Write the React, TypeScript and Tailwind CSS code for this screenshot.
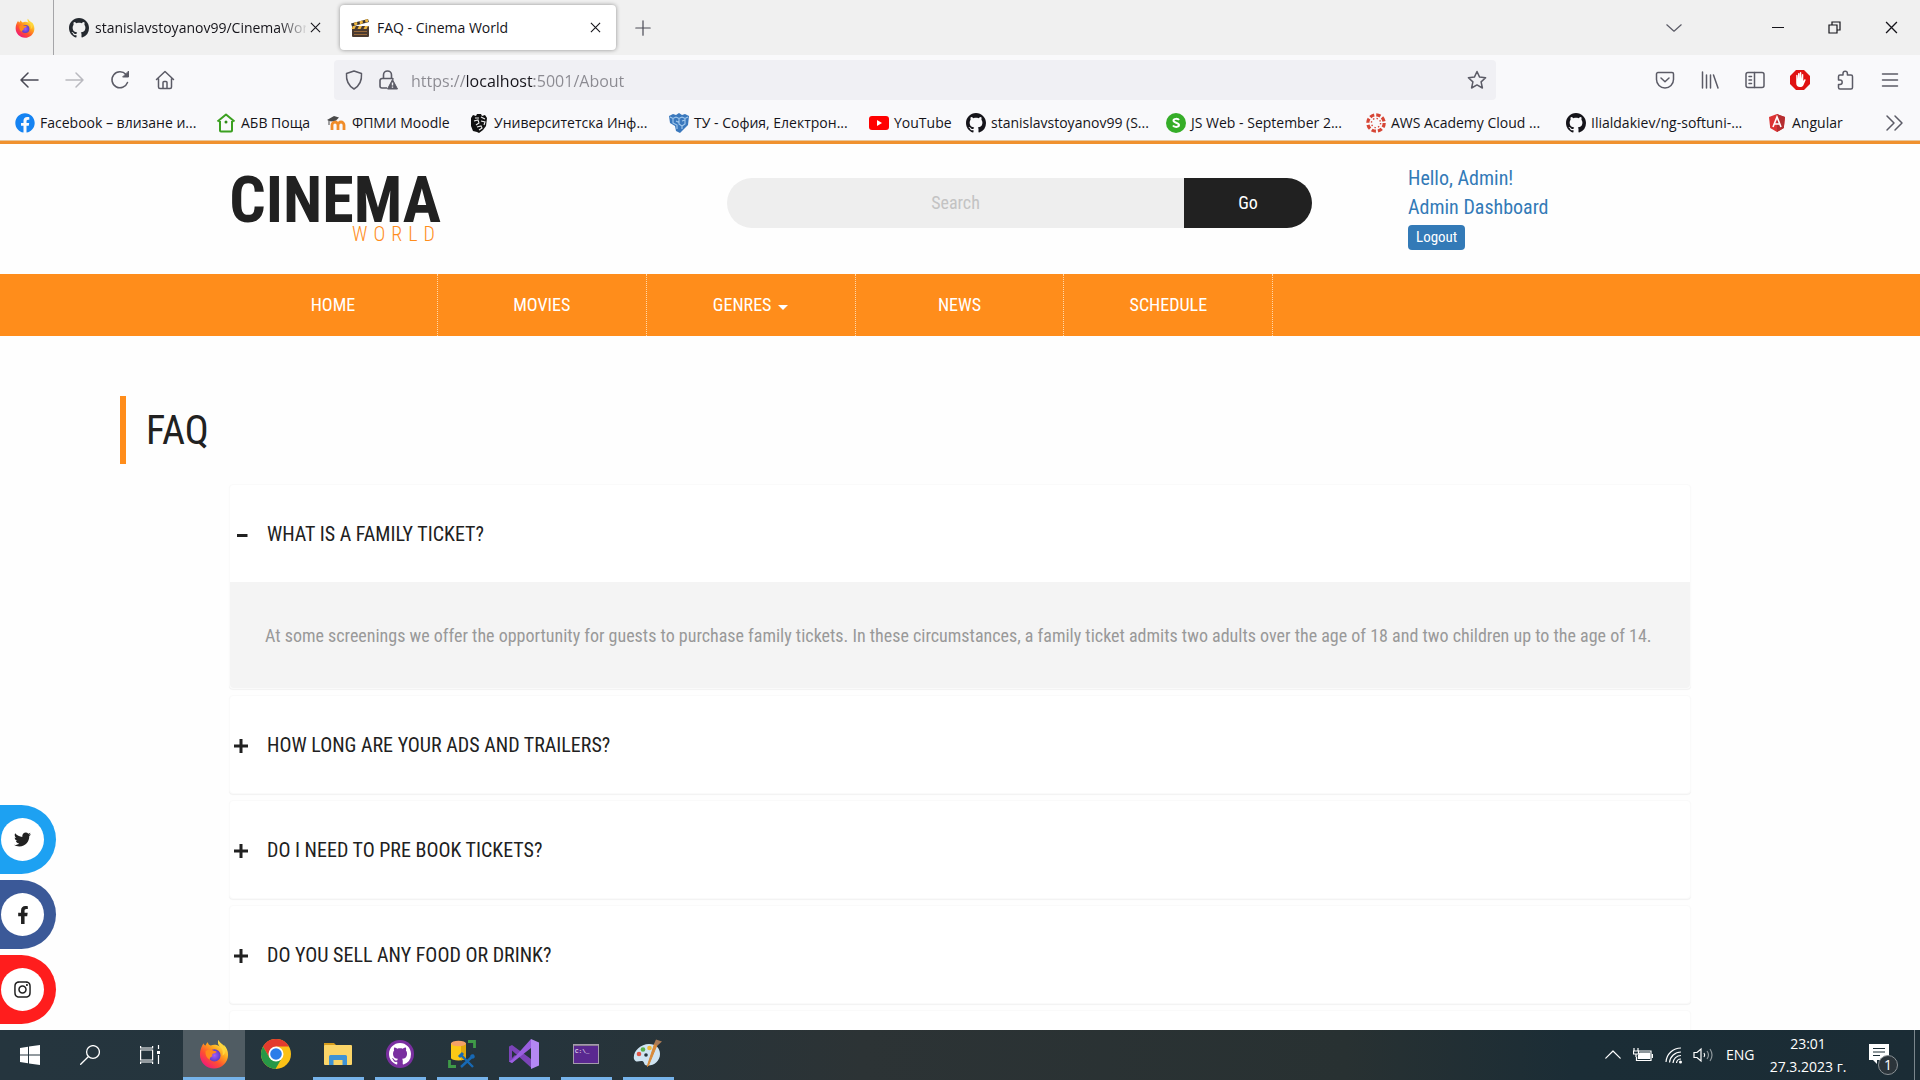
import { useState, type ReactNode } from "react";
import { FaFacebook, FaFacebookF, FaInstagram, FaTwitter } from "react-icons/fa";

const ui = "font-['Open_Sans','Noto_Sans',sans-serif]";
const site = "font-['Roboto_Condensed','Liberation_Sans_Narrow','Roboto',sans-serif]";

const GithubMark = ({ className = "size-5" }: { className?: string }) => (
  <svg viewBox="0 0 16 16" fill="currentColor" className={className} aria-hidden="true">
    <path d="M8 0C3.58 0 0 3.58 0 8c0 3.54 2.29 6.53 5.47 7.59.4.07.55-.17.55-.38 0-.19-.01-.82-.01-1.49-2.01.37-2.53-.49-2.69-.94-.09-.23-.48-.94-.82-1.13-.28-.15-.68-.52-.01-.53.63-.01 1.08.58 1.23.82.72 1.21 1.87.87 2.33.66.07-.52.28-.87.51-1.07-1.78-.2-3.64-.89-3.64-3.95 0-.87.31-1.59.82-2.15-.08-.2-.36-1.02.08-2.12 0 0 .67-.21 2.2.82.64-.18 1.32-.27 2-.27s1.36.09 2 .27c1.53-1.04 2.2-.82 2.2-.82.44 1.1.16 1.92.08 2.12.51.56.82 1.27.82 2.15 0 3.07-1.87 3.75-3.65 3.95.29.25.54.73.54 1.48 0 1.07-.01 1.93-.01 2.2 0 .21.15.46.55.38A8.01 8.01 0 0 0 16 8c0-4.42-3.58-8-8-8z" />
  </svg>
);

const Firefox = ({ className, id }: { className: string; id: string }) => (
  <svg viewBox="0 0 32 32" className={className} aria-hidden="true">
    <defs>
      <linearGradient id={`${id}-a`} x1="0.85" y1="0.1" x2="0.2" y2="0.95">
        <stop offset="0" stopColor="#fff44f" />
        <stop offset="0.35" stopColor="#ffa41c" />
        <stop offset="0.65" stopColor="#ff5130" />
        <stop offset="1" stopColor="#f0167c" />
      </linearGradient>
      <radialGradient id={`${id}-b`}>
        <stop offset="0" stopColor="#a35bff" />
        <stop offset="1" stopColor="#5b3ec4" />
      </radialGradient>
    </defs>
    <path fill={`url(#${id}-a)`} d="M20.5 1c-.6 3 .2 5 2 7-3-2-7-2.500-10-1C10.500 6.500 9.500 5 9.500 3.500 8.500 4.200 7.500 5.500 7 7c-1-.3-2-1.500-2-2.500C3 7 1 11.500 1 16.500 1 25 7.700 31.500 16 31.500S31 25 31 17c0-4-1.500-8-4.500-10.500.3 1.200.4 2 .2 3C25.500 5.500 22 4.500 20.500 1z" />
    <circle cx="16.500" cy="17.500" r="6.500" fill={`url(#${id}-b)`} />
    <path fill="#ff8a1c" d="M7 13c3-2.500 6-2 8.500-.5 2 .2 3 .5 3.200 1.300-1 1.500-3 1.500-4 2-.8.700-1 1.700-.2 2.700-2 .5-3.300 2-3 3.500C8 20.500 6.500 17 7 13z" />
    <path fill="#ffd53d" d="M20.500 1c-.6 3 .2 5 2 7 2.500 2.500 3.500 6 2.500 9.500 3-1 4-5 2-10C25.500 5.500 22 4.500 20.500 1z" />
  </svg>
);

const Stroke = ({ children, className = "size-5", width = 1.5 }: { children: ReactNode; className?: string; width?: number }) => (
  <svg viewBox="0 0 20 20" fill="none" stroke="currentColor" strokeWidth={width} strokeLinecap="round" strokeLinejoin="round" className={className} aria-hidden="true">
    {children}
  </svg>
);

const Cross = ({ className = "size-3" }: { className?: string }) => (
  <svg viewBox="0 0 12 12" stroke="currentColor" strokeWidth="1.200" className={className} aria-hidden="true">
    <path d="M1 1l10 10M11 1L1 11" />
  </svg>
);

const Clapper = () => (
  <svg viewBox="0 0 20 20" className="size-5" aria-hidden="true">
    <path d="M1 5.500L18 1l1 3L2 8.500z" fill="#3a3330" />
    <path d="M4 4.700l3-.8.500 2.700-3 1zM9.500 3.300l3-.8.500 2.700-3 1zM15 1.800l2.500-.7.800 2.700-2.800.800z" fill="#f0b840" />
    <rect x="2" y="8" width="17" height="11" rx="1" fill="#4a3a30" />
    <path d="M3 8h3l-1.500 3h-3zM9 8h3l-1.500 3h-3zM15 8h3l-1.500 3h-3z" fill="#f0b840" />
    <path d="M4 13.500h13M4 16.500h13" stroke="#9a6a3a" />
  </svg>
);

const Tabs = () => (
  <div className="flex h-[55px] items-center bg-[#f0f0f0] text-[#15141a]">
    <button aria-label="Firefox View" className="flex h-full w-[54px] items-center justify-center border-r border-[#a5a5a8] pr-2 pl-1">
      <Firefox className="size-5" id="ffs" />
    </button>
    <div className="flex w-[286px] items-center pl-[15px]">
      <GithubMark className="size-5 shrink-0 text-[#24292f]" />
      <span className="ml-[6px] w-[211px] text-sm whitespace-nowrap [mask-image:linear-gradient(to_right,black_184px,transparent_214px)]">
        stanislavstoyanov99/CinemaWor
      </span>
      <button aria-label="Close tab" className="ml-1"><Cross className="size-[11px]" /></button>
    </div>
    <div className="flex h-[45px] w-[276px] items-center rounded bg-white pr-[15px] pl-[10px] shadow-[0_0_4px_rgba(0,0,0,0.4)]">
      <Clapper />
      <span className="ml-[7px] flex-1 text-sm">FAQ - Cinema World</span>
      <button aria-label="Close tab"><Cross className="size-[11px]" /></button>
    </div>
    <button aria-label="New tab" className="ml-[19px] text-[#4a4a55]">
      <Stroke className="size-4" width={1.5}><path d="M10 1v18M1 10h18" /></Stroke>
    </button>
    <div className="ml-auto flex items-center">
      <button aria-label="List all tabs" className="mr-[47px] flex w-[57px] justify-center text-[#5b5b66]">
        <Stroke className="size-4"><path d="M1 6l9 8 9-8" /></Stroke>
      </button>
      <button aria-label="Minimize" className="flex w-[57px] justify-center">
        <svg viewBox="0 0 12 12" className="size-3" stroke="currentColor" aria-hidden="true"><path d="M0 5.500h12" /></svg>
      </button>
      <button aria-label="Restore" className="flex w-[57px] justify-center">
        <svg viewBox="0 0 13 13" className="size-[13px]" fill="none" stroke="currentColor" strokeWidth="1.200" aria-hidden="true">
          <path d="M1 4h8v8H1zM4 4V1h8v8H9" />
        </svg>
      </button>
      <button aria-label="Close window" className="flex w-[57px] justify-center"><Cross className="size-[13px]" /></button>
    </div>
  </div>
);

const Toolbar = () => (
  <div className="flex h-[50px] items-center bg-[#f9f9fb] text-[#5b5b66]">
    <div className="flex w-[334px] items-center gap-[25px] pl-5">
      <button aria-label="Back" className="text-[#4a4a55]"><Stroke><path d="M18 10H1M8 3l-7 7 7 7" /></Stroke></button>
      <button aria-label="Forward" className="text-[#b9b9bf]"><Stroke><path d="M1 10h17M11 3l7 7-7 7" /></Stroke></button>
      <button aria-label="Reload">
        <Stroke><path d="M17.500 12.500A8 8 0 1 1 16 4.500l1.500 1.500" /><path d="M18.500 1.500V7H13z" fill="currentColor" strokeWidth="1" /></Stroke>
      </button>
      <button aria-label="Home">
        <Stroke><path d="M1.500 9.500L10 1.500l8.500 8M3.500 8.500V17a1.500 1.500 0 0 0 1.500 1.500h10a1.500 1.500 0 0 0 1.500-1.500V8.500M8 18v-5.500a1 1 0 0 1 1-1h2a1 1 0 0 1 1 1V18" /></Stroke>
      </button>
    </div>
    <div className="flex h-10 w-[1162px] shrink items-center rounded bg-[#f0f0f4] px-[9px] pl-[10px]">
      <Stroke><path d="M10 1l7.500 2.500c.5 7-1.500 12-7.500 15.500C4 15.500 2 10.500 2.500 3.500z" /></Stroke>
      <svg viewBox="0 0 20 20" className="ml-[14px] size-5" fill="none" stroke="currentColor" strokeWidth="1.600" aria-hidden="true">
        <path d="M5.500 8.500V5a4 4 0 0 1 8 0v3.500M9 18H4a2 2 0 0 1-2-2v-5.500a2 2 0 0 1 2-2h10.500l1 1" />
        <path d="M14.500 9.500l5 9.500h-10z" fill="currentColor" strokeLinejoin="round" strokeWidth="1" />
        <path d="M14.500 12.500v3M14.500 16.500v1.300" stroke="#f0f0f4" strokeWidth="1.400" />
      </svg>
      <input
        aria-label="Address"
        defaultValue="https://localhost:5001/About"
        className="mt-[2px] ml-[13px] min-w-0 flex-1 bg-[linear-gradient(to_right,#8b8a91_56px,#15141a_56px,#15141a_123px,#8b8a91_123px)] bg-clip-text text-base text-transparent caret-black outline-none"
      />
      <button aria-label="Bookmark this page">
        <Stroke><path d="M10 1.500l2.600 5.600 6 .7-4.500 4.100 1.300 6.100-5.400-3.100L4.600 18l1.300-6.100L1.400 7.800l6-.7z" /></Stroke>
      </button>
    </div>
    <div className="ml-auto flex items-center gap-[25px] pr-5">
      <button aria-label="Save to Pocket">
        <Stroke><path d="M3 2.500h14a1.500 1.500 0 0 1 1.500 1.500v5.500a8.500 8.500 0 0 1-17 0V4A1.500 1.500 0 0 1 3 2.500zM6 8l4 3.800L14 8" /></Stroke>
      </button>
      <button aria-label="Library"><Stroke><path d="M2.500 2v16M6.500 5v13M10.500 5v13M13.500 5l4.500 13" /></Stroke></button>
      <button aria-label="Sidebars">
        <Stroke><rect x="1" y="2.500" width="18" height="15" rx="2" /><path d="M9.500 2.500v15M4 6.500h2.500M4 10h2.500M4 13.500h2.500" /></Stroke>
      </button>
      <button aria-label="AdBlock">
        <svg viewBox="0 0 20 20" className="size-5" aria-hidden="true">
          <path d="M6 0h8l6 6v8l-6 6H6l-6-6V6z" fill="#e01212" />
          <path d="M6.200 10V5.500c0-1 1.300-1 1.400 0L8 9V3.700c0-1 1.500-1 1.500 0V8.500l.3-5.700c.1-1 1.500-1 1.500 0V9l.6-4.500c.1-.9 1.400-.7 1.400.1V11l1-1.500c.7-.8 1.700 0 1.200.9l-2 4.600c-.6 1.400-1.600 2-3.500 2-2.500 0-3.800-1.600-3.800-4z" fill="#fff" />
        </svg>
      </button>
      <button aria-label="Extensions">
        <Stroke><path d="M8 5V3.500a2.200 2.200 0 0 1 4.400 0V5H16a1.500 1.500 0 0 1 1.500 1.500v11A1.500 1.500 0 0 1 16 19H5a1.500 1.500 0 0 1-1.500-1.500v-3H5a2.200 2.200 0 0 0 0-4.400H3.500V6.500A1.500 1.500 0 0 1 5 5z" /></Stroke>
      </button>
      <button aria-label="Application menu"><Stroke><path d="M2.500 4h15M2.500 10h15M2.500 16h15" /></Stroke></button>
    </div>
  </div>
);

const bookmarks: { label: string; width: string; icon: ReactNode }[] = [
  { label: "Facebook – влизане и...", width: "w-[201px]", icon: <FaFacebook className="size-5 text-[#1583f2]" /> },
  {
    label: "АБВ Поща", width: "w-[111px]",
    icon: <svg viewBox="0 0 20 20" className="size-5"><path d="M4 8v9.500a1 1 0 0 0 1 1h10a1 1 0 0 0 1-1V8M1.500 8.500L10 1.500l8.500 7" fill="none" stroke="#3ba020" strokeWidth="2" strokeLinejoin="round" /><circle cx="10" cy="9" r="1.500" fill="#2f8a18" /></svg>,
  },
  {
    label: "ФПМИ Moodle", width: "w-[142px]",
    icon: <svg viewBox="0 0 20 20" className="size-5"><path d="M5 17v-5a3 3 0 0 1 6 0v5M11 17v-5a3 3 0 0 1 6 0v5" fill="none" stroke="#f08c28" strokeWidth="2.800" /><path d="M0 7l7-4 5 1.500-3 3-5 1z" fill="#4a4a4a" /><path d="M2 7v5" stroke="#4a4a4a" /></svg>,
  },
  {
    label: "Университетска Инф...", width: "w-[200px]",
    icon: <svg viewBox="0 0 20 20" className="size-5"><path d="M2 5l2-3 3 1 1-2h4l1 2 3-1 2 3-1 8-3 4-4 3-2-1-4-1-2-5z" fill="#111" /><path d="M6 5h4M12 4l4 2M5 8l4-1 1 3-3 2M12 8l4 1-1 3M8 14l4-1 1 2-3 2" fill="none" stroke="#eee" strokeWidth="1.100" /></svg>,
  },
  {
    label: "ТУ - София, Електрон...", width: "w-[200px]",
    icon: <svg viewBox="0 0 20 20" className="size-5"><path d="M0 3l4-2 3 1 3-2 3 2 3-1 4 2-1 9-4 4-4 4-4-2-1-5-5-3z" fill="#3a78bd" /><path d="M1 4l3 1.500L7 4l3 1.500L13 4l3 1.500L19 4M4 6v4l4 2v4M10 6v5l3 2v3M16 6v5l-3 2M7 8l3 1.500M13 8l3-1" fill="none" stroke="#a5cbee" strokeWidth="1.100" /></svg>,
  },
  {
    label: "YouTube", width: "w-[97px]",
    icon: <svg viewBox="0 0 20 20" className="size-5"><rect y="3" width="20" height="14" rx="3" fill="#f00" /><path d="M8 7l5 3-5 3z" fill="#fff" /></svg>,
  },
  { label: "stanislavstoyanov99 (S...", width: "w-[200px]", icon: <GithubMark /> },
  {
    label: "JS Web - September 2...", width: "w-[200px]",
    icon: <svg viewBox="0 0 20 20" className="size-5"><circle cx="10" cy="10" r="10" fill="#35ad28" /><path d="M13 7c-.8-1.400-5.500-1.800-5.500.6 0 2.600 5.500 1.600 5.500 4.500 0 2.500-5 2.200-6 .5" fill="none" stroke="#fff" strokeWidth="2" /></svg>,
  },
  {
    label: "AWS Academy Cloud ...", width: "w-[200px]",
    icon: <svg viewBox="0 0 20 20" className="size-5" fill="none" stroke="#d64535"><circle cx="10" cy="10" r="8.200" strokeWidth="3.200" strokeDasharray="4.400 2.040" /><circle cx="10" cy="10" r="4.600" strokeWidth="1.400" strokeDasharray="1.400 2.210" /></svg>,
  },
  { label: "Ilialdakiev/ng-softuni-...", width: "w-[201px]", icon: <GithubMark /> },
  {
    label: "Angular", width: "w-[100px]",
    icon: <svg viewBox="0 0 20 20" className="size-5"><path d="M10 1l8 3-1.200 11L10 19l-6.800-4L2 4z" fill="#dd3333" /><path d="M10 1l8 3-1.200 11L10 19z" fill="#b52e31" /><path d="M6 14l4-10 4 10M7.500 11h5" fill="none" stroke="#fff" strokeWidth="1.600" /></svg>,
  },
];

const Bookmarks = () => (
  <nav aria-label="Bookmarks" className="flex h-[35px] items-center bg-[#f9f9fb] pt-px pl-[15px] text-[#15141a]">
    {bookmarks.map((b) => (
      <a key={b.label} href="#" className={`flex shrink items-center gap-[5px] text-sm whitespace-nowrap ${b.width}`}>
        <span className="shrink-0">{b.icon}</span>
        {b.label}
      </a>
    ))}
    <button aria-label="More bookmarks" className="mr-[15px] ml-auto text-[#5b5b66]">
      <Stroke><path d="M2 3l7 7-7 7M10 3l7 7-7 7" /></Stroke>
    </button>
  </nav>
);

const navItems = ["HOME", "MOVIES", "GENRES", "NEWS", "SCHEDULE"];

const SiteHeader = () => (
  <header>
    <div className="h-1 border-t border-[#e8c79c] bg-[#f0912f]" />
    <div className="mx-auto flex h-[130px] max-w-[1464px]">
      <a href="#" className="mt-8 ml-[2px] flex w-[211px] flex-col items-end">
        <span className="text-[64px] leading-[50px] font-bold text-[#212121]">CINEMA</span>
        <span className="text-xl leading-4 font-light tracking-[6px] text-[#ff8d1b]">WORLD</span>
      </a>
      <form role="search" onSubmit={(e) => e.preventDefault()} className="mt-[34px] ml-[286px] flex h-[50px] w-[585px]">
        <input aria-label="Search" placeholder="Search" className="min-w-0 flex-1 rounded-l-full bg-[#eee] text-center text-lg outline-none placeholder:text-[#c3c3c3]" />
        <button className="w-32 rounded-r-full bg-[#212121] text-lg text-white">Go</button>
      </form>
      <div className="mt-5 ml-24 flex flex-col items-start text-xl leading-[29px] text-[#337ab7]">
        <a href="#">Hello, Admin!</a>
        <a href="#">Admin Dashboard</a>
        <button className="mt-[3px] h-[25px] rounded bg-[#337ab7] px-2 text-[15px] leading-[25px] text-white">Logout</button>
      </div>
    </div>
    <nav aria-label="Main" className="bg-[#ff8d1b]">
      <ul className="mx-auto grid h-[62px] max-w-[1462px] grid-cols-7">
        {navItems.map((n) => (
          <li key={n} className="border-r border-dotted border-[#ffd7a8]">
            <a href="#" className="flex h-full items-center justify-center text-lg text-white">
              {n}
              {n === "GENRES" && <span className="mt-1 ml-[7px] border-x-[5px] border-t-[5px] border-x-transparent border-t-white" />}
            </a>
          </li>
        ))}
      </ul>
    </nav>
  </header>
);

const questions = [
  {
    q: "WHAT IS A FAMILY TICKET?",
    a: "At some screenings we offer the opportunity for guests to purchase family tickets. In these circumstances, a family ticket admits two adults over the age of 18 and two children up to the age of 14.",
  },
  { q: "HOW LONG ARE YOUR ADS AND TRAILERS?" },
  { q: "DO I NEED TO PRE BOOK TICKETS?" },
  { q: "DO YOU SELL ANY FOOD OR DRINK?" },
  { q: "" },
];

const Faq = () => {
  const [open, setOpen] = useState(0);
  return (
    <div>
      <div className="mx-auto mt-[60px] max-w-[1680px]">
        <h1 className="h-[68px] border-l-[6px] border-[#ff8d1b] pl-5 text-[40px] leading-[70px] text-[#212121]">FAQ</h1>
      </div>
      <div className="mx-auto mt-5 flex max-w-[1462px] flex-col gap-[6px]">
        {questions.map((item, i) => (
          <section key={i} className="rounded border border-[#fafafa] bg-white shadow-[0_1px_1px_rgba(0,0,0,0.05)]">
            <h2>
              <button
                aria-expanded={open === i}
                aria-label={item.q || "More questions"}
                onClick={() => setOpen(open === i ? -1 : i)}
                className="flex h-[97px] w-full items-center pl-1 text-left text-xl text-[#212121]"
              >
                <svg viewBox="0 0 14 14" className="mt-[2px] mr-[19px] size-[14px]" fill="currentColor" aria-hidden="true">
                  {open === i ? <path d="M3 6h10.500v3H3z" /> : item.q && <path d="M0 5.500h5.500V0h3v5.500H14v3H8.500V14h-3V8.500H0z" />}
                </svg>
                {item.q}
              </button>
            </h2>
            {open === i && item.a && (
              <div className="rounded-b bg-[#f4f4f4] px-[35px] pt-[41px] pb-[39px] text-lg leading-[26px] text-[#999]">{item.a}</div>
            )}
          </section>
        ))}
      </div>
    </div>
  );
};

const socials = [
  { name: "Twitter", bg: "bg-[#1da1f2]", icon: <FaTwitter className="size-[17px]" /> },
  { name: "Facebook", bg: "bg-[#3b5998]", icon: <FaFacebookF className="size-[18px]" /> },
  { name: "Instagram", bg: "bg-[#ff1d1d]", icon: <FaInstagram className="size-[19px]" /> },
];

const Socials = () => (
  <aside className="absolute bottom-[6px] left-0 flex flex-col gap-[6px]">
    {socials.map((s) => (
      <a key={s.name} href="#" aria-label={s.name} className={`flex h-[69px] w-14 items-center rounded-r-full pl-px ${s.bg}`}>
        <span className="flex size-[43px] items-center justify-center rounded-full bg-white text-[#212121]">{s.icon}</span>
      </a>
    ))}
  </aside>
);

const apps: { name: string; icon: ReactNode; state: "active" | "running" | "idle" }[] = [
  { name: "Firefox", state: "active", icon: <Firefox className="size-[30px]" id="ffl" /> },
  {
    name: "Chrome", state: "idle",
    icon: <svg viewBox="0 0 30 30" className="size-[30px]"><circle cx="15" cy="15" r="15" fill="#fbc116" /><path d="M2 7.500A15 15 0 0 1 28 7.500H15L8.500 18.700z" fill="#e33b2e" /><path d="M2 7.500A15 15 0 0 0 14.500 30L21 18.700 15 22l-6.500-3.300z" fill="#279847" /><circle cx="15" cy="15" r="7.500" fill="#fff" /><circle cx="15" cy="15" r="5.800" fill="#2b7de9" /></svg>,
  },
  {
    name: "File Explorer", state: "running",
    icon: <svg viewBox="0 0 28 24" className="h-6 w-7"><path d="M0 1h10l3 3H0z" fill="#d69c1c" /><rect y="3" width="28" height="20" rx="1" fill="#fbd568" /><path d="M5 23V14.500A1.500 1.500 0 0 1 6.500 13h15a1.500 1.500 0 0 1 1.500 1.500V23h-4.500v-5h-9v5z" fill="#3f93d6" /></svg>,
  },
  {
    name: "GitHub Desktop", state: "running",
    icon: <span className="flex size-7 items-center justify-center rounded-full bg-[#7a2fa0] text-white"><GithubMark className="size-[22px]" /></span>,
  },
  {
    name: "SQL Server Management Studio", state: "running",
    icon: <svg viewBox="0 0 28 28" className="size-7"><path d="M3 3h15v15a7.500 2.500 0 0 1-15 0z" fill="#fbc916" /><path d="M13 3h5v15l-5 2.500z" fill="#e0a80c" /><ellipse cx="10.500" cy="3.500" rx="7.500" ry="2.800" fill="#f4a266" /><path d="M20 1.500h6.500V8M1.500 20v6.500H8" fill="none" stroke="#3f9a48" strokeWidth="2.800" /><path d="M13 15l12 12M26 15L13 27" stroke="#1769b5" strokeWidth="2.400" /><path d="M11 17l4-4M23 15l3 3" stroke="#1769b5" strokeWidth="3" /></svg>,
  },
  {
    name: "Visual Studio", state: "running",
    icon: <svg viewBox="0 0 30 30" className="size-[30px]"><path d="M0 7.500L3 6l19 14v8.500L3 11.500V19l3-3 3 2-6 6-3-1.500z" fill="#7b44b8" /><path d="M22 0v9L3 24l-3-1.500L4 20z" fill="#9a5fe0" /><path d="M22 0l8 3.500v23L22 30z" fill="#b488f4" /></svg>,
  },
  {
    name: "Command Prompt", state: "running",
    icon: (
      <svg viewBox="0 0 26 20" className="h-5 w-[26px]">
        <rect x="0.500" y="0.500" width="25" height="19" fill="#5a2890" stroke="#a49bab" />
        <path d="M1 1.500h24" stroke="#8b7f94" />
        <text x="2" y="9" fontSize="6" fill="#fff" fontFamily="Liberation Mono, monospace">C:\_</text>
      </svg>
    ),
  },
  {
    name: "Paint", state: "running",
    icon: <svg viewBox="0 0 30 30" className="size-[30px]"><path d="M1 20C-.5 13 7 5 16 5c7 0 11 4 11 10 0 7-6 12-13 11.500-4-.2-2-4-5-4.500-3-.5-6 2.500-8-2z" fill="#cfe4f2" /><circle cx="6" cy="15" r="2.300" fill="#e05545" /><circle cx="10" cy="10.500" r="2.300" fill="#5ab04a" /><circle cx="16.500" cy="9" r="2.300" fill="#efb93a" /><circle cx="13" cy="16" r="1.800" fill="#25343c" /><path d="M24 6L15.500 26.500l-1 1 .300-2L21.500 5z" fill="#d88a3a" stroke="#d88a3a" /><path d="M21 5l2-4.500 6 2-4.500 4z" fill="#a97a55" /></svg>,
  },
];

const barStates = {
  active: "border-[#76b3ea]",
  running: "border-[#76b3ea]",
  idle: "border-transparent",
};

const Taskbar = () => (
  <footer className="flex h-[50px] shrink-0 items-stretch bg-[linear-gradient(to_right,#25353e_0%,#25343c_28%,#2c3335_45%,#283132_70%,#1b2d36_82%,#1b2c35_100%)] text-white">
    <button aria-label="Start" className="flex w-[60px] items-center justify-center">
      <svg viewBox="0 0 20 20" className="size-5" fill="currentColor" aria-hidden="true"><path d="M0 3l8-1.200v7.700H0zM9 1.600L20 0v9.500H9zM0 10.500h8v7.700L0 17zM9 10.500h11V20L9 18.400z" /></svg>
    </button>
    <button aria-label="Search Windows" className="flex w-[60px] items-center justify-center">
      <Stroke width={1.3}><circle cx="13" cy="7" r="6.400" /><path d="M8.500 11.500L.7 19.300" /></Stroke>
    </button>
    <button aria-label="Task View" className="mr-[3px] flex w-[60px] items-center justify-center">
      <svg viewBox="0 0 20 20" className="size-5" fill="none" stroke="currentColor" strokeWidth="1.200" aria-hidden="true"><path d="M.6 5h12v10H.6zM.6 1v2h12V1M.6 19v-2h12v2M18.500 0v4M18.500 10v9" /><path d="M17 6h3v3h-3z" fill="currentColor" stroke="none" /></svg>
    </button>
    {apps.map((a) => (
      <button key={a.name} aria-label={a.name} className={`flex w-[62px] justify-center ${a.state === "active" ? "bg-[#505c63]" : ""}`}>
        <span className={`flex h-full items-center justify-center border-b-[3px] ${a.state === "active" ? "w-full" : "w-[51px]"} ${barStates[a.state]}`}>{a.icon}</span>
      </button>
    ))}
    <div className="ml-auto flex items-center">
      <button aria-label="Show hidden icons"><Stroke className="size-4"><path d="M1 14l9-9 9 9" /></Stroke></button>
      <svg viewBox="0 0 20 14" className="ml-3 h-[14px] w-5" fill="none" stroke="currentColor" strokeWidth="1.200" aria-label="Battery"><path d="M5.500 3H18v9.500H3.500V9" /><path d="M7 5h9.500v5.500H5.500V7.500z" fill="currentColor" /><path d="M19.400 6v4M1 0v3M5 0v3M.5 3h5v3h-5zM3 6v3" /></svg>
      <svg viewBox="0 0 18 18" className="ml-3 size-[18px]" fill="none" stroke="currentColor" strokeWidth="1.200" aria-label="Wi-Fi"><path d="M1 16A15 15 0 0 1 16 2M4.500 16.500A11.500 11.500 0 0 1 16 6M8 17a8 8 0 0 1 8-7.500M11.500 17a4.500 4.500 0 0 1 4.500-4" /><circle cx="15.500" cy="16" r="1.500" fill="currentColor" stroke="none" /></svg>
      <svg viewBox="0 0 20 16" className="ml-[10px] h-4 w-5" fill="none" stroke="currentColor" strokeWidth="1.200" aria-label="Volume"><path d="M1 5.500h3L8 2v12l-4-3.500H1z" /><path d="M11 6q1.500 2 0 4" /><path d="M14 4q3 4 0 8M17 2q4 6 0 12" opacity="0.500" /></svg>
      <span className="ml-[13px] w-8 text-sm">ENG</span>
      <div className="ml-[10px] w-20 text-center text-sm leading-[23px] whitespace-nowrap">
        <div>23:01</div>
        <div>27.3.2023 г.</div>
      </div>
      <button aria-label="Notifications" className="relative ml-[21px] flex h-full w-[45px] items-center">
        <svg viewBox="0 0 20 20" className="mb-[2px] size-5" aria-hidden="true"><path d="M0 0h20v16H8v4l-4-4H0z" fill="#fff" /><path d="M4 4.500h12M4 8h12M4 11.500h7" stroke="#1b2c35" /></svg>
        <span className="absolute top-[25px] left-[9px] flex size-5 items-center justify-center rounded-full border border-[#8a9195] bg-[#2b343a] text-sm leading-none">1</span>
      </button>
      <div className="h-full w-[6px] border-l border-[#7b868c]" />
    </div>
  </footer>
);

export default function App() {
  return (
    <div className={`flex h-screen flex-col overflow-hidden bg-white ${ui}`}>
      <Tabs />
      <Toolbar />
      <Bookmarks />
      <main className={`relative min-h-0 flex-1 overflow-hidden bg-[#fefefe] ${site}`}>
        <SiteHeader />
        <Faq />
        <Socials />
      </main>
      <Taskbar />
    </div>
  );
}
